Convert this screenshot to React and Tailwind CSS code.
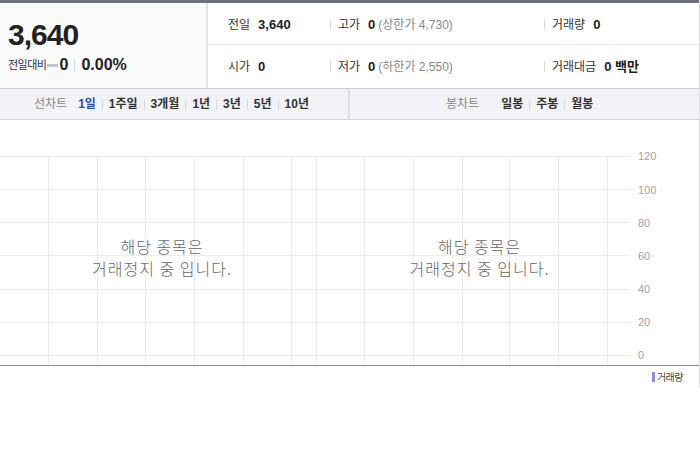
const font = 'font-["Liberation_Sans","Noto_Sans_CJK_KR",sans-serif]';

const Sep = () => <span className="mx-[7px] inline-block h-[11px] w-px bg-[#d9d9d9]" />;
const NavSep = () => <span className="mx-[6px] inline-block h-[11px] w-px bg-[#d9d9d9]" />;

const lineRanges = ['1일', '1주일', '3개월', '1년', '3년', '5년', '10년'];
const candleRanges = ['일봉', '주봉', '월봉'];

const hLines = [36, 69, 102, 135, 169, 202, 235];
const vLines = [48, 97, 145, 194, 243, 291, 316, 364, 413, 462, 509, 558, 607];
const axis = ['120', '100', '80', '60', '40', '20', '0'];

function InfoCell({ label, value, note, className }) {
  return (
    <div className={`flex items-center ${className}`}>
      <span className="text-[12px] text-[#333]">{label}</span>
      <span className="ml-[8px] text-[13px] font-bold text-[#222]">{value}</span>
      {note && <span className="ml-[3px] text-[12px] text-[#888]">{note}</span>}
    </div>
  );
}

function Halted() {
  return (
    <div className="text-center font-['Noto_Sans_CJK_KR',sans-serif] text-[16px] font-light leading-[22px] tracking-[1px] text-[#666]">
      <p>해당 종목은</p>
      <p>거래정지 중 입니다.</p>
    </div>
  );
}

export default function App() {
  return (
    <div className={`w-[700px] bg-white ${font}`}>
      <div className="border-r border-[#dedede]">
        {/* price summary */}
        <div className="flex h-[89px] border-t-[3px] border-b border-t-[#6e717a] border-b-[#cfcfcf]">
          <div className="w-[208px] border-r-2 border-[#e4e4e4] bg-[#fafafa] pl-[8px] pt-[17px]">
            <div className="text-[30px] font-bold leading-[30px] tracking-[-1px] text-[#222]">3,640</div>
            <div className="mt-[3px] flex items-center">
              <span className="text-[11px] tracking-[-0.5px] text-[#333]">전일대비</span>
              <span className="ml-px mr-px inline-block h-[3px] w-[11px] bg-[#c4c4c4]" />
              <span className="text-[16px] font-bold text-[#222]">0</span>
              <span className="mx-[6px] inline-block h-[13px] w-px bg-[#d9d9d9]" />
              <span className="text-[16px] font-bold text-[#222]">0.00%</span>
            </div>
          </div>
          <div className="flex flex-1 flex-col">
            <div className="flex h-[42px] items-center border-b border-[#ebebeb] pt-[2px]">
              <InfoCell label="전일" value="3,640" className="w-[115px] pl-[20px]" />
              <Sep />
              <InfoCell label="고가" value="0" note="(상한가 4,730)" className="w-[199px]" />
              <Sep />
              <InfoCell label="거래량" value="0" />
            </div>
            <div className="flex flex-1 items-center">
              <InfoCell label="시가" value="0" className="w-[115px] pl-[20px]" />
              <Sep />
              <InfoCell label="저가" value="0" note="(하한가 2,550)" className="w-[199px]" />
              <Sep />
              <InfoCell label="거래대금" value="0 백만" />
            </div>
          </div>
        </div>

        {/* chart period tabs */}
        <div className="flex h-[31px] border-b border-[#d5d5d5] bg-[#f1f3f7] text-[12px] font-bold">
          <div className="flex w-[350px] items-center border-r-2 border-[#dcdee2] pl-[34px]">
            <span className="mr-[11px] font-normal text-[#888]">선차트</span>
            {lineRanges.map((r, i) => (
              <span key={r} className="flex items-center">
                {i > 0 && <NavSep />}
                <span className={i === 0 ? 'text-[#2a4ea3]' : 'text-[#333]'}>{r}</span>
              </span>
            ))}
          </div>
          <div className="flex flex-1 items-center pl-[96px]">
            <span className="mr-[22px] font-normal text-[#888]">봉차트</span>
            {candleRanges.map((r, i) => (
              <span key={r} className="flex items-center">
                {i > 0 && <NavSep />}
                <span className="text-[#333]">{r}</span>
              </span>
            ))}
          </div>
        </div>

        {/* chart */}
        <div className="flex h-[246px] border-b border-[#8c8c8c]">
          <div className="relative w-[630px]">
            <svg width="630" height="245" className="block">
              {hLines.map((y) => (
                <line key={y} x1="0" x2="630" y1={y + 0.5} y2={y + 0.5} stroke="#ececec" />
              ))}
              {vLines.map((x) => (
                <line key={x} x1={x + 0.5} x2={x + 0.5} y1="36" y2="245" stroke="#ececec" />
              ))}
            </svg>
            <div className="absolute inset-0 flex pt-[115px]">
              <div className="w-[324px] shrink-0"><Halted /></div>
              <div className="w-[311px] shrink-0"><Halted /></div>
            </div>
          </div>
          <div className="flex flex-1 flex-col pl-[8px] pt-[20px] text-[11px] text-[#a3a3a3]">
            {axis.map((a) => (
              <div key={a} className="flex h-[33.2px] shrink-0 items-center">{a}</div>
            ))}
          </div>
        </div>

        {/* legend */}
        <div className="flex h-[22px] items-center justify-end pr-[16px]">
          <span className="mr-[2px] inline-block h-[10px] w-[3px] bg-[#9a8cd0]" />
          <span className="text-[10px] tracking-[-0.5px] text-[#444]">거래량</span>
        </div>
      </div>
    </div>
  );
}
